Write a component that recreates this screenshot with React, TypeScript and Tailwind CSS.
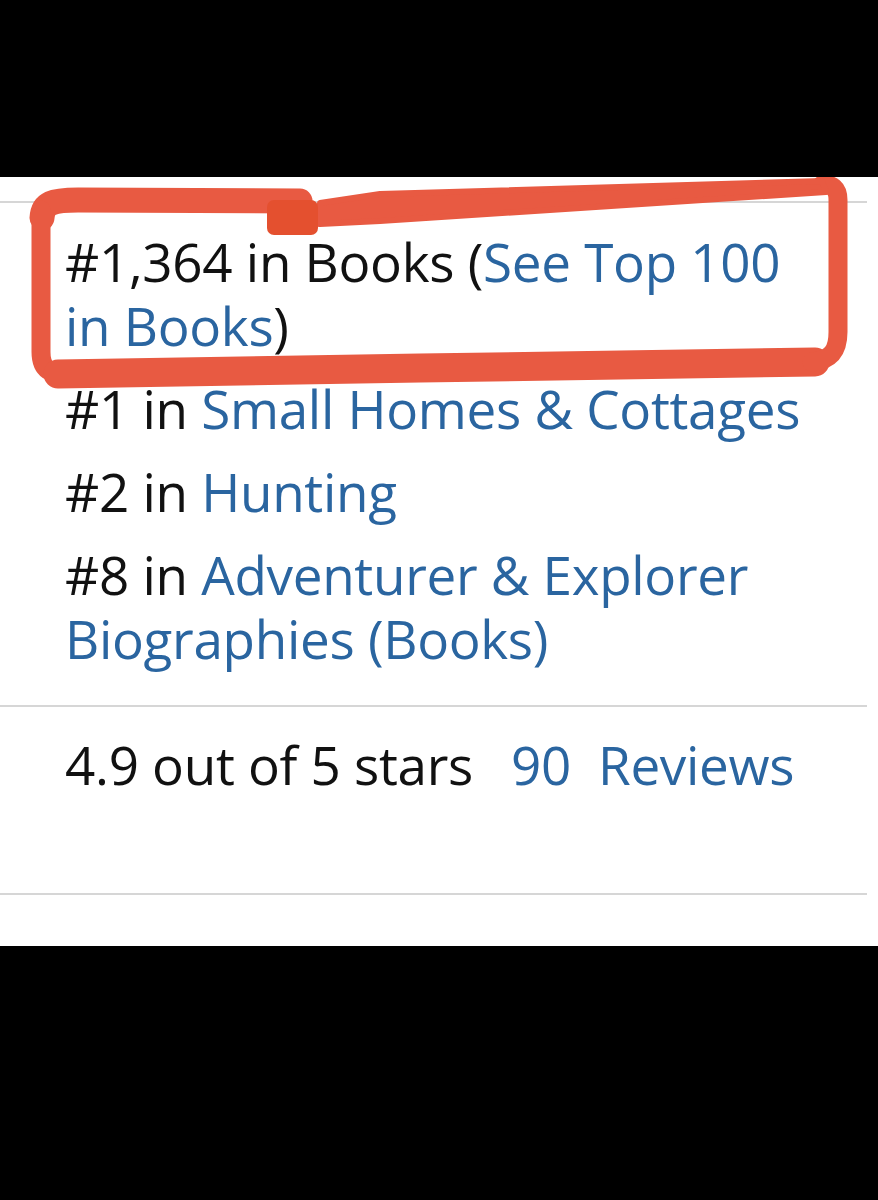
const ranks = [
  { pos: '#1', label: 'Small Homes & Cottages' },
  { pos: '#2', label: 'Hunting' },
  { pos: '#8', label: 'Adventurer & Explorer Biographies (Books)' },
]

// hand-drawn marker box round the first rank, in page coordinates
function Annotation() {
  return (
    <svg
      className="pointer-events-none absolute left-0 top-0"
      width="878"
      height="420"
      viewBox="0 177 878 420"
    >
      <g fill="none" stroke="#e85a42" strokeLinecap="round" strokeLinejoin="round">
        <path d="M42 218 C43 203 52 200 78 200 L300 201" strokeWidth="25" />
        <path d="M41 210 L41 352 C41 370 50 375 72 375" strokeWidth="19" />
        <path d="M58 374 L420 368 L815 362" strokeWidth="29" />
        <path d="M812 362 C832 360 838 350 838 332 L838 200 C838 188 832 184 822 185" strokeWidth="19" />
        <path
          d="M320 203 L380 194 L822 181 L826 192 L380 221 L320 224 Z"
          fill="#e85a42"
          strokeWidth="6"
        />
      </g>
      <rect x="267" y="200" width="51" height="35" rx="7" fill="#e4502f" />
    </svg>
  )
}

export default function App() {
  return (
    <div
      className="flex min-h-[1200px] w-[878px] flex-col bg-black"
      style={{ fontFamily: '"Open Sans", "Noto Sans", sans-serif' }}
    >
      <div className="h-[177px]" />

      <div className="relative bg-white pt-[24px] pb-[51px]">
        <div className="mr-[11px] h-[2px] bg-[#d6d6d6]" />

        <ul className="flex flex-col gap-[19px] pt-[27px] pb-[34px] pl-[65px] pr-[40px] text-[53px] leading-[64px] tracking-[-0.3px] text-[#111]">
          <li>
            #1,364 in Books (<span className="text-[#2a65a0]">See Top 100 in Books</span>)
          </li>
          {ranks.map((r) => (
            <li key={r.pos}>
              {r.pos} in <span className="text-[#2a65a0]">{r.label}</span>
            </li>
          ))}
        </ul>

        <div className="mr-[11px] h-[2px] bg-[#d6d6d6]" />

        <div className="flex gap-[38px] pt-[26px] pb-[96px] pl-[65px] text-[53px] leading-[64px] tracking-[-0.3px] text-[#111]">
          <span>4.9 out of 5 stars</span>
          <span className="text-[#2a65a0]">90&nbsp;&nbsp;Reviews</span>
        </div>

        <div className="mr-[11px] h-[2px] bg-[#d6d6d6]" />

        <Annotation />
      </div>

      <div className="flex-1" />
    </div>
  )
}
